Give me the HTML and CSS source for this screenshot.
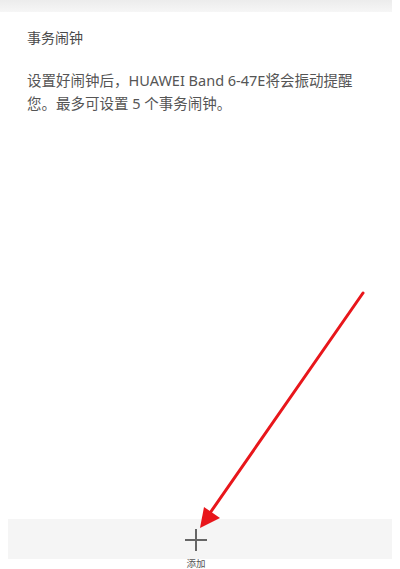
FILE: index.html
```html
<!DOCTYPE html>
<html lang="zh-CN">
<head>
  <meta charset="UTF-8">
  <title>事务闹钟</title>
  <link rel="stylesheet" href="styles.css">
</head>
<body>
  <div class="screen">
    <div class="topbar"></div>

    <div class="content">
      <h1 class="title">事务闹钟</h1>
      <p class="desc">设置好闹钟后，HUAWEI Band 6-47E将会振动提醒您。最多可设置 5 个事务闹钟。</p>
    </div>

    <div class="footer">
      <div class="add-bar">
        <svg class="plus" width="22" height="22" viewBox="0 0 22 22">
          <path d="M11 0v22M0 11h22" stroke="#666" stroke-width="2" fill="none"/>
        </svg>
      </div>
      <div class="add-label">添加</div>
    </div>

    <!-- red pointer to the add button -->
    <svg class="pointer" width="400" height="569" viewBox="0 0 400 569">
      <line x1="363" y1="293" x2="210" y2="513" stroke="#e8161b" stroke-width="3" stroke-linecap="round"/>
      <polygon points="200,528 204,507 220,518" fill="#e8161b"/>
    </svg>
  </div>
</body>
</html>
```

FILE: styles.css
```css
html, body {
  margin: 0;
  padding: 0;
  background: #fff;
}

.screen {
  position: relative;
  width: 400px;
  height: 569px;
  display: flex;
  flex-direction: column;
  overflow: hidden;
  font-family: "Noto Sans", "Noto Sans CJK SC", sans-serif;
  color: #555;
}

.topbar {
  width: 392px;
  height: 12px;
  background: linear-gradient(#ececec, #f6f6f6);
}

.content {
  flex: 1;
  padding: 16px 30px 0 27px;
}

.title {
  margin: 0;
  font-size: 14px;
  font-weight: normal;
  line-height: 20px;
  color: #4a4a4a;
}

.desc {
  margin: 21px 0 0;
  font-size: 14.5px;
  line-height: 23px;
  color: #555;
}

.footer {
  display: flex;
  flex-direction: column;
  align-items: center;
}

.add-bar {
  align-self: stretch;
  margin: 0 8px;
  height: 40px;
  background: #f5f5f5;
  display: flex;
  justify-content: center;
  align-items: center;
}

.plus {
  margin-left: -8px;
  margin-top: 1px;
}

.add-label {
  height: 10px;
  margin-left: -8px;
  font-size: 9.5px;
  line-height: 10px;
  color: #555;
}

.pointer {
  position: absolute;
  left: 0;
  top: 0;
  pointer-events: none;
}
```
